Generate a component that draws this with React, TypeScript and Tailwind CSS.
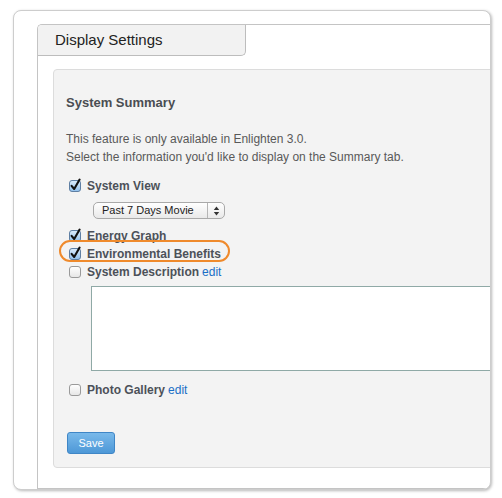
const options = [
  { label: "System View", checked: true },
  { label: "Energy Graph", checked: true },
  { label: "Environmental Benefits", checked: true, highlight: true },
  { label: "System Description", checked: false, edit: true },
];

function Checkbox({ checked }: { checked: boolean }) {
  return (
    <svg width="14" height="14" viewBox="0 0 14 14" className="shrink-0 overflow-visible">
      <defs>
        <linearGradient id="cbOn" x1="0" y1="0" x2="0" y2="1">
          <stop offset="0" stopColor="#dcecfb" />
          <stop offset="1" stopColor="#8fbfec" />
        </linearGradient>
        <linearGradient id="cbOff" x1="0" y1="0" x2="0" y2="1">
          <stop offset="0" stopColor="#ffffff" />
          <stop offset="1" stopColor="#e6e6e6" />
        </linearGradient>
      </defs>
      <rect x="1.5" y="1.5" width="11" height="11" rx="2.5" fill={checked ? "url(#cbOn)" : "url(#cbOff)"} stroke={checked ? "#5f7fa3" : "#9a9a9a"} />
      {checked && <path d="M3.6 6.8 L6.2 10 L11.6 0.6" fill="none" stroke="#111" strokeWidth="2.1" strokeLinecap="round" strokeLinejoin="round" />}
    </svg>
  );
}

function Row({ label, checked, edit, highlight }: { label: string; checked: boolean; edit?: boolean; highlight?: boolean }) {
  return (
    <div className="relative flex items-center h-[18px] pl-[2px]">
      {highlight && <div className="absolute left-[-7px] top-[-5px] w-[171px] h-[22px] rounded-[11px] border-2 border-[#ef8a2c]" />}
      <Checkbox checked={checked} />
      <span className="ml-[5px] text-[12px] font-bold text-[#4c5159]">{label}</span>
      {edit && <a className="ml-[3px] text-[12px] text-[#1a6fc6]">edit</a>}
    </div>
  );
}

export default function App() {
  return (
    <div className="w-[502px] h-[498px] bg-white pt-[10px] pl-[13px] font-['Liberation_Sans',Arial,sans-serif]">
      <div className="w-[478px] rounded-[8px] border border-[#cdcdcd] bg-white pt-[13px] pl-[23px] overflow-hidden shadow-[1px_1px_3px_rgba(0,0,0,0.28)]">
        <div className="w-[470px] border-l border-t border-b border-[#c4c4c4] rounded-tl-[5px]">
          <div className="w-[208px] h-[31px] bg-[#f2f2f2] border-r border-b border-[#bdbdbd] rounded-tl-[4px] rounded-br-[5px] pl-[17px] text-[15px] leading-[30px] text-[#222]">
            Display Settings
          </div>

          <div className="ml-[15px] mt-[13px] mb-[20px] w-[460px] bg-[#f3f3f3] border border-[#dcdcdc] rounded-l-[4px] pl-[12px] pt-[25px] pb-[13px]">
            <h2 className="text-[13px] leading-[16px] font-bold text-[#4a4d52]">System Summary</h2>
            <p className="mt-[19px] text-[12px] leading-[18px] text-[#595959]">
              This feature is only available in Enlighten 3.0.
              <br />
              Select the information you'd like to display on the Summary tab.
            </p>

            <div className="mt-[11px]">
              <Row {...options[0]} />
            </div>

            <div className="mt-[7px] ml-[27px] w-[132px] h-[17px] flex items-center rounded-[5px] border border-[#a9a9a9] bg-gradient-to-b from-white to-[#e9e9e9]">
              <span className="flex-1 pl-[8px] text-[11px] leading-none text-[#222]">Past 7 Days Movie</span>
              <div className="w-[17px] h-full border-l border-[#b5b5b5] flex items-center justify-center">
                <svg width="7" height="10" viewBox="0 0 7 10">
                  <path d="M3.5 0.5 L6.2 4 L0.8 4 Z" fill="#333" />
                  <path d="M3.5 9.5 L6.2 6 L0.8 6 Z" fill="#333" />
                </svg>
              </div>
            </div>

            <div className="mt-[8px]">
              {options.slice(1).map(o => (
                <Row key={o.label} {...o} />
              ))}
            </div>

            <div className="mt-[5px] ml-[25px] w-[420px] h-[85px] bg-white border border-[#8fa9a6]" />

            <div className="mt-[10px]">
              <Row label="Photo Gallery" checked={false} edit />
            </div>

            <button className="mt-[33px] ml-[1px] block w-[48px] h-[22px] rounded-[3px] border border-[#3f86c6] bg-gradient-to-b from-[#79b9ea] to-[#4d98d7] text-[11px] text-white">
              Save
            </button>
          </div>
        </div>
      </div>
    </div>
  );
}
